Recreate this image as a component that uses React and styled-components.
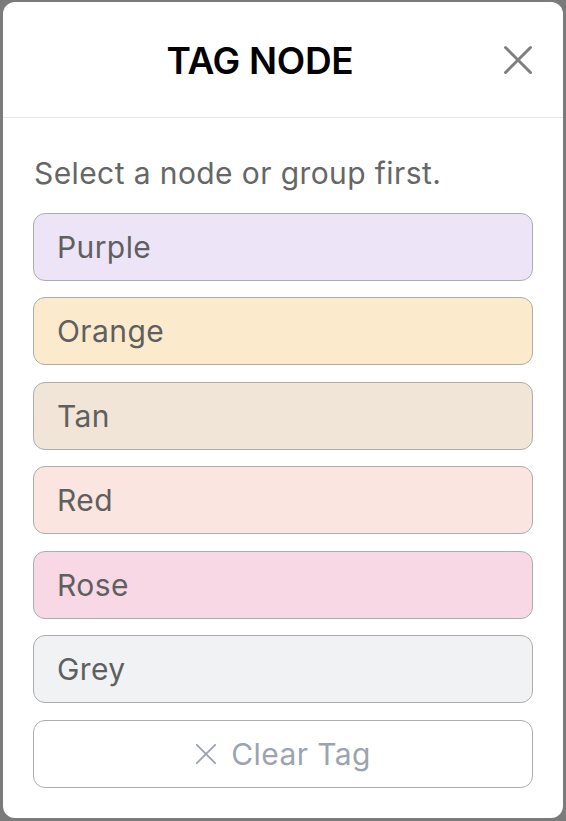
import React from "react";
import styled, { createGlobalStyle } from "styled-components";

const GlobalStyle = createGlobalStyle`
  * { box-sizing: border-box; }
  html, body { margin: 0; padding: 0; }
  body {
    background: #7b7b7b;
    font-family: "Inter", "Noto Sans", "Liberation Sans", sans-serif;
  }
`;

const Backdrop = styled.div`
  width: 566px;
  height: 821px;
  padding: 2px 3px 3px 3px;
  background: #7b7b7b;
  display: flex;
`;

const Modal = styled.div`
  width: 560px;
  height: 816px;
  background: #ffffff;
  border-radius: 12px;
  display: flex;
  flex-direction: column;
  overflow: hidden;
`;

const Header = styled.div`
  height: 116px;
  flex-shrink: 0;
  display: flex;
  align-items: center;
  padding: 0 30px;
  border-bottom: 1px solid #e4e4e7;
`;

const Title = styled.h2`
  flex: 1;
  margin: 0;
  text-align: center;
  font-size: 37px;
  font-weight: 600;
  letter-spacing: -0.3px;
  color: #000000;
  padding-top: 2px;
`;

const CloseButton = styled.button`
  width: 46px;
  height: 46px;
  padding: 8px 0 8px 16px;
  border: none;
  background: none;
  display: flex;
  align-items: center;
  justify-content: flex-end;
  cursor: pointer;
`;

const Body = styled.div`
  padding: 0 30px 30px;
  display: flex;
  flex-direction: column;
  gap: 16.5px;
`;

const Hint = styled.p`
  margin: 0;
  padding: 37px 0 5px 1px;
  font-size: 30px;
  line-height: 36px;
  letter-spacing: 0.4px;
  color: #666666;
`;

const TagButton = styled.button`
  height: 68px;
  width: 100%;
  border: 1px solid #adadb0;
  border-radius: 12px;
  background: ${(p) => p.$bg};
  display: flex;
  align-items: center;
  justify-content: ${(p) => (p.$center ? "center" : "flex-start")};
  gap: 14px;
  padding: 0 23px;
  font-family: inherit;
  font-size: 30px;
  letter-spacing: 0.4px;
  color: ${(p) => (p.$muted ? "#9ca3af" : "#5f5f5f")};
  cursor: pointer;
`;

const tags = [
  { name: "Purple", bg: "#ede4f7" },
  { name: "Orange", bg: "#fbeacc" },
  { name: "Tan", bg: "#f1e5d8" },
  { name: "Red", bg: "#fae5e0" },
  { name: "Rose", bg: "#f8d8e5" },
  { name: "Grey", bg: "#f1f2f4" },
];

const Cross = ({ size, color, width }) => (
  <svg width={size} height={size} viewBox="0 0 24 24" fill="none">
    <path d="M2 2 L22 22 M22 2 L2 22" stroke={color} strokeWidth={width} strokeLinecap="round" />
  </svg>
);

export default function App() {
  return (
    <>
      <GlobalStyle />
      <Backdrop>
        <Modal>
          <Header>
            <Title>TAG NODE</Title>
            <CloseButton aria-label="Close">
              <Cross size={32} color="#7f7f7f" width={2.4} />
            </CloseButton>
          </Header>
          <Body>
            <Hint>Select a node or group first.</Hint>
            {tags.map((t) => (
              <TagButton key={t.name} $bg={t.bg}>
                {t.name}
              </TagButton>
            ))}
            <TagButton $bg="#ffffff" $center $muted>
              <Cross size={22} color="#9ca3af" width={2} />
              Clear Tag
            </TagButton>
          </Body>
        </Modal>
      </Backdrop>
    </>
  );
}
